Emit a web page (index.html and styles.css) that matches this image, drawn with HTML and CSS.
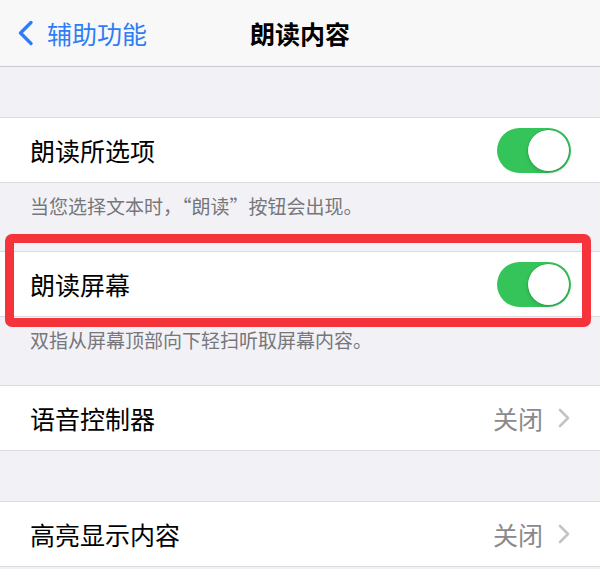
FILE: index.html
```html
<!DOCTYPE html>
<html lang="zh-CN">
<head>
<meta charset="utf-8">
<title>朗读内容</title>
<link rel="stylesheet" href="styles.css">
</head>
<body>
<div class="screen">
  <header class="nav">
    <div class="back">
      <svg class="back-chev" width="17" height="26" viewBox="0 0 17 26"><path d="M14 2.5 L3.5 13 L14 23.5" fill="none" stroke="#2f7df6" stroke-width="3.4" stroke-linecap="round" stroke-linejoin="round"/></svg>
      <span class="back-text">辅助功能</span>
    </div>
    <div class="title">朗读内容</div>
    <div></div>
  </header>

  <div class="gap"></div>
  <div class="row">
    <span class="label">朗读所选项</span>
    <span class="toggle"><span class="knob"></span></span>
  </div>
  <div class="footer">当您选择文本时，“朗读”按钮会出现。</div>

  <div class="row">
    <span class="label">朗读屏幕</span>
    <span class="toggle"><span class="knob"></span></span>
  </div>
  <div class="footer">双指从屏幕顶部向下轻扫听取屏幕内容。</div>

  <div class="row">
    <span class="label">语音控制器</span>
    <span class="value">关闭<svg class="chev" width="12" height="20" viewBox="0 0 12 20"><path d="M2 2 L10 10 L2 18" fill="none" stroke="#c4c4c8" stroke-width="2.6" stroke-linecap="round" stroke-linejoin="round"/></svg></span>
  </div>
  <div class="gap"></div>
  <div class="row">
    <span class="label">高亮显示内容</span>
    <span class="value">关闭<svg class="chev" width="12" height="20" viewBox="0 0 12 20"><path d="M2 2 L10 10 L2 18" fill="none" stroke="#c4c4c8" stroke-width="2.6" stroke-linecap="round" stroke-linejoin="round"/></svg></span>
  </div>

  <div class="highlight"></div>
</div>
</body>
</html>
```

FILE: styles.css
```css
html, body {
  margin: 0;
  padding: 0;
}
body {
  background: #f2f2f6;
  font-family: "Noto Sans CJK SC", "Noto Sans", sans-serif;
}
.screen {
  position: relative;
  width: 600px;
  height: 569px;
  overflow: hidden;
  background: #f2f2f6;
}
.nav {
  box-sizing: border-box;
  height: 67px;
  background: #f8f8f9;
  border-bottom: 1px solid #cbcbcf;
  display: grid;
  grid-template-columns: 1fr auto 1fr;
  align-items: center;
}
.back {
  display: flex;
  align-items: center;
  padding-left: 17px;
  color: #2f7df6;
  font-size: 25px;
}
.back-text {
  margin-left: 13px;
  line-height: 30px;
}
.title {
  font-size: 25px;
  font-weight: 700;
  color: #000;
  line-height: 30px;
}
.gap {
  height: 50px;
}
.row {
  box-sizing: border-box;
  height: 66px;
  background: #fff;
  border-top: 1px solid #dcdce0;
  border-bottom: 1px solid #dcdce0;
  display: flex;
  align-items: center;
  justify-content: space-between;
  padding: 0 29px 0 30px;
}
.label {
  font-size: 25px;
  color: #000;
  line-height: 30px;
}
.toggle {
  box-sizing: border-box;
  width: 74px;
  height: 45px;
  border-radius: 23px;
  background: #35c45a;
  display: flex;
  justify-content: flex-end;
  align-items: center;
  padding: 2px;
}
.knob {
  width: 41px;
  height: 41px;
  border-radius: 50%;
  background: #fff;
  box-shadow: 0 0 0 0.5px rgba(0, 80, 20, 0.25), 0 2px 4px rgba(0, 0, 0, 0.15);
}
.value {
  display: flex;
  align-items: center;
  font-size: 25px;
  color: #8a8a8e;
  line-height: 30px;
  margin-right: 1px;
}
.chev {
  margin-left: 15px;
}
.footer {
  box-sizing: border-box;
  height: 68px;
  padding: 10px 30px 0;
  font-size: 19px;
  line-height: 26px;
  color: #76767b;
}
.highlight {
  position: absolute;
  left: 5px;
  top: 234px;
  width: 586px;
  height: 93px;
  box-sizing: border-box;
  border: 9px solid #f4333b;
  border-radius: 7px;
}
```
